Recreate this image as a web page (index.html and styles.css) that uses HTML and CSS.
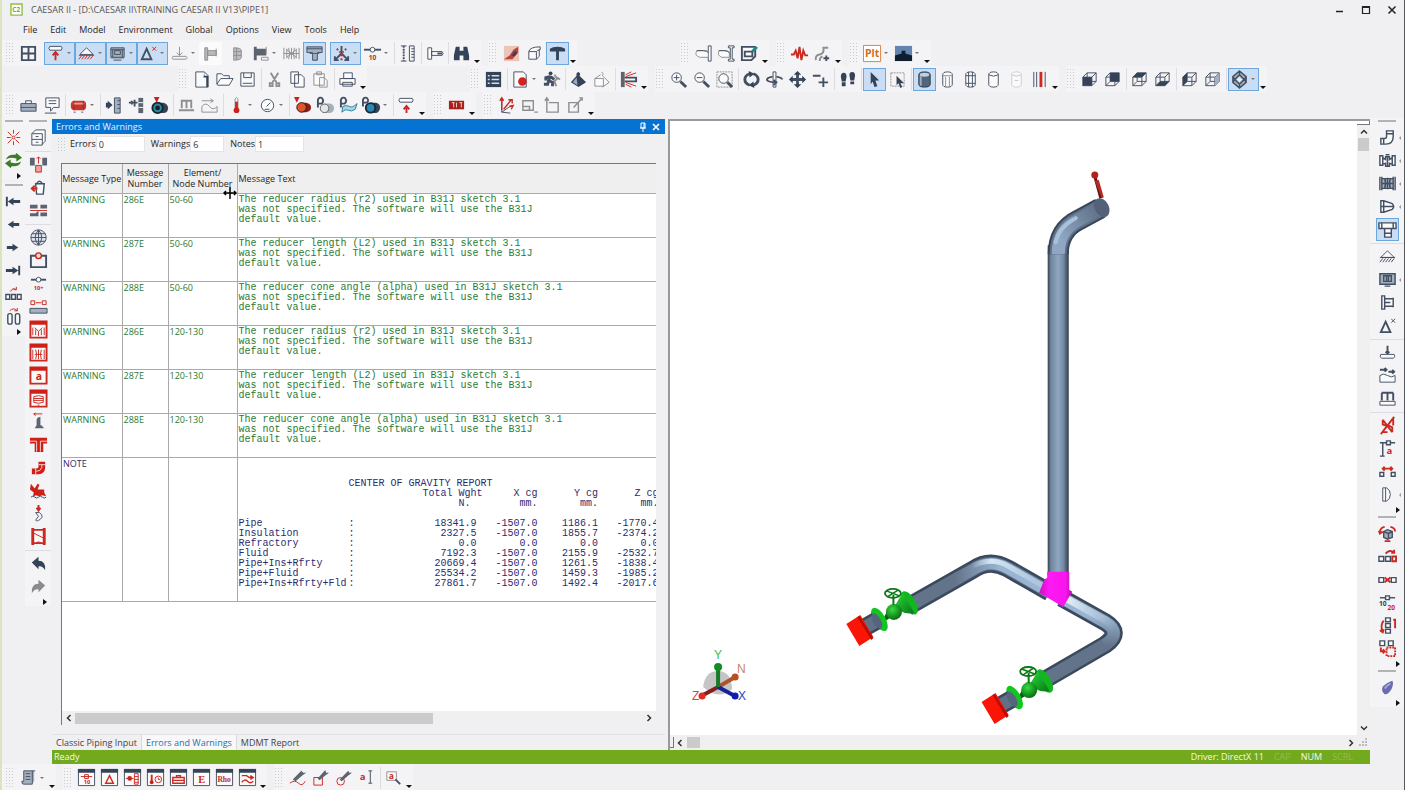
FILE: index.html
```html
<!DOCTYPE html>
<html lang="en">
<head>
<meta charset="utf-8">
<title>CAESAR II - PIPE1</title>
<link rel="stylesheet" href="styles.css">
</head>
<body>
<svg class="defs" aria-hidden="true">
  <symbol id="cyl" viewBox="0 0 20 20"><path d="M5 5v10q0 3 5 3t5-3V5q0-3-5-3T5 5z"/></symbol>
  <symbol id="cube" viewBox="0 0 20 20"><path class="k" d="M3 7.500h9.500v9H3zM7.500 3H17v9H7.500zM3 7.500 7.500 3M12.500 7.500 17 3M12.500 16.500 17 12M3 16.500 7.500 12"/></symbol>
  <symbol id="frame" viewBox="0 0 20 20"><path class="w" d="M1.500 1.500h17v17h-17z"/><path class="kf" d="M1 1h18v4H1z"/></symbol>
  <symbol id="rframe" viewBox="0 0 20 20"><path class="rw" d="M1.500 1.500h17v17h-17z"/><path class="rf" d="M1 1h18v4H1z"/></symbol>
</svg>

<header class="titlebar">
  <svg class="logo" viewBox="0 0 14 14"><path d="M1 1h12v12H1z" fill="#fff" stroke="#93bd45" stroke-width="1.500"/><text x="2.500" y="9.500" font-size="7" font-weight="700" fill="#7aa62c">C2</text></svg>
  <h1>CAESAR II - [D:\CAESAR II\TRAINING CAESAR II V13\PIPE1]</h1>
  <div class="winctl">
    <button aria-label="Minimize"><svg viewBox="0 0 10 10"><path d="M1 6.500h7" stroke="#222" stroke-width="1.500"/></svg></button>
    <button aria-label="Maximize"><svg viewBox="0 0 10 10"><path d="M1.500 1.500h7v7h-7zM1 2.500h8" fill="none" stroke="#222" stroke-width="1.200"/></svg></button>
    <button aria-label="Close"><svg viewBox="0 0 10 10"><path d="m1.500 1.500 7 7m0-7-7 7" stroke="#222" stroke-width="1.500"/></svg></button>
  </div>
</header>

<nav class="menu">
  <button>File</button><button>Edit</button><button>Model</button><button>Environment</button><button>Global</button><button>Options</button><button>View</button><button>Tools</button><button>Help</button>
</nav>

<div class="bars">
  <div class="row">
    <div class="group">
      <i class="grip"></i>
      <button class="b" aria-label="Layout"><svg viewBox="0 0 20 20"><path class="k2" d="M3 3h14v14H3zM10 3v14M3 10h14"/></svg></button>
      <i class="sep"></i>
      <button class="b drop on" aria-label="Forces"><svg viewBox="0 0 20 20"><path class="w" d="M4 2.500h12q2 1.500 0 4H4q-2-2 0-4z"/><path class="r2" d="M10 17V9M7 12l3-3.500 3 3.500"/></svg></button>
      <button class="b drop on" aria-label="Restraints"><svg viewBox="0 0 20 20"><path class="w" d="m10 4 7 7H3z"/><path class="r" d="M2 12h16M5 12l-3 4m6-4-3 4m6-4-3 4m6-4-3 4m6-4-3 4"/></svg></button>
      <button class="b drop on" aria-label="Hangers"><svg viewBox="0 0 20 20"><path class="gf" d="M3 4h14v12H3z"/><path class="k" d="M3 4h14v10H3zM3 6h14M5 6v8m10-8v8M7 7h6v4H7zM6 17h8"/></svg></button>
      <button class="b drop on" aria-label="Displacements"><svg viewBox="0 0 20 20"><path class="k2" d="m8 5 5 11H3z"/><path class="r" d="m14 3 4 4m0-4-4 4"/></svg></button>
      <button class="b drop" aria-label="Uniform loads"><svg viewBox="0 0 20 20"><path class="g" d="M10 3v9M7 9l3 3 3-3M3 13h14q2 3-1 3H4q-3 0-1-3z"/></svg></button>
      <button class="b pale" aria-label="Nozzles"><svg viewBox="0 0 20 20"><path fill="#b9b9bb" d="M4 4h3v13H4zM7 7h9v5H7z"/><path class="g" d="M4 4h3v13H4zM7 7h9v5H7zM16 5v8"/></svg></button>
      <i class="sep"></i>
      <button class="b" aria-label="Flange"><svg viewBox="0 0 20 20"><path fill="#bdbdbf" d="M6 4q8 0 8 3v7q0 3-8 3z"/><path class="g" d="M6 4q8 0 8 3v7q0 3-8 3zM9 4v13M6 8h8M6 12h8"/></svg></button>
      <button class="b drop" aria-label="Flange check"><svg viewBox="0 0 20 20"><path class="dk" d="M3 3h3v2h10v7H6v5H3z"/><path class="g" d="M16 3v8M11 14h7v3h-7z"/></svg></button>
      <button class="b" aria-label="Expansion joint"><svg viewBox="0 0 20 20"><path class="g" d="M2 4v12M18 4v12M5 5v10M15 5v10M7 4q2 6 0 12M10 4v12M13 4q-2 6 0 12M2 10h16M5 6l10 8M5 14l10-8"/></svg></button>
      <button class="b on" aria-label="Tee"><svg viewBox="0 0 20 20"><path class="gf" d="M2 3h16v6h-5v9H8V9H2z"/><path class="k" d="M2 3h16v6h-5v8H8V9H2zM2 5h16"/><path class="r" d="M5 10h10"/></svg></button>
      <i class="sep"></i>
      <button class="b drop on" aria-label="Axes"><svg viewBox="0 0 20 20"><path class="k2" d="M10 2v8l-6 6m6-6 6 6M3 13v4h4m6 0h4v-4"/><path class="r2" stroke-dasharray="2 2" d="m5 5 4 4m6-4-4 4m-1 2v7"/></svg></button>
      <button class="b drop" aria-label="Node numbers"><svg viewBox="0 0 20 20"><path class="k2" d="M1 6h18"/><circle class="w" cx="10" cy="6" r="2.500"/><text class="tr" x="6" y="17" font-size="7">10</text></svg></button>
      <i class="sep line"></i>
      <button class="b" aria-label="Length"><svg viewBox="0 0 20 20"><path class="k" d="M3 2h6M3 18h6M12 2h5v16h-5zM14 5h3m-3 3h3m-3 3h3m-3 3h3"/><path class="k2" stroke-dasharray="2 1" d="M6 2v16"/></svg></button>
      <i class="sep line"></i>
      <button class="b" aria-label="Tag"><svg viewBox="0 0 20 20"><path class="w" d="M3 4h4v12H3zM7 8h11q2 2 0 4H7z"/><path class="k2" d="M13 10h5"/></svg></button>
      <i class="sep line"></i>
      <button class="b" aria-label="Find"><svg viewBox="0 0 20 20"><path class="kf" d="M4 3h4v4h4V3h4l2 9v5h-6v-5H8v5H2v-5z"/></svg></button>
      <button class="more" aria-label="More"></button>
    </div>
    <div class="group">
      <i class="grip"></i>
      <button class="b" aria-label="Material"><svg viewBox="0 0 20 20"><path fill="#ecc4ba" d="M2 2h16v16H2z"/><path fill="#b6453b" d="m2 16 6-4 4-6 5-3v6l-6 7z"/><path class="kf" d="m10 12 4-5 2 3-3 3z"/></svg></button>
      <button class="b" aria-label="Volume"><svg viewBox="0 0 20 20"><path class="w" d="M4 8h8v8H4zM4 8q1-5 12-5v3q-3 0-4 2M12 16l3-3V6"/></svg></button>
      <button class="b on" aria-label="T view"><svg viewBox="0 0 20 20"><path class="kf" d="M2 5q3-2 8-2t8 2v3H2zM8.500 8h3v9h-3z"/></svg></button>
      <button class="more" aria-label="More"></button>
    </div>
    <div class="group far">
      <i class="grip"></i>
      <button class="b" aria-label="Pipe"><svg viewBox="0 0 20 20"><path class="w" d="M15 2h3v16h-3z"/><path class="gw" d="M3 7h7q4 0 5 2v5H6q-6-2-3-7z"/><path class="k" d="M3 7h7q4 0 5 2"/></svg></button>
      <button class="b" aria-label="Beam"><svg viewBox="0 0 20 20"><path class="gw" d="M2 7h6q3 0 5 2v5H5q-5-2-3-7z"/><path class="k" d="M2 7h6q3 0 5 2"/><path class="w" d="M12 2h6v2h-2v12h2v2h-6v-2h2V4h-2z"/></svg></button>
      <button class="b" aria-label="Save model"><svg viewBox="0 0 20 20"><path class="w2" d="M2 3h14v10l-4 4H2zM5 8h8v5H5z"/><path fill="#19898a" d="m12 7 4-5 3 2-5 5z"/></svg></button>
      <button class="more" aria-label="More"></button>
    </div>
    <div class="group">
      <i class="grip"></i>
      <button class="b" aria-label="Dynamics"><svg viewBox="0 0 20 20"><path class="r2" d="M1 11h3l2-4 2 8 2-12 2 14 2-10 2 5h3"/></svg></button>
      <button class="b" aria-label="Hydrodynamic"><svg viewBox="0 0 20 20"><path class="g2" d="M3 17q-1-5 4-6t4-7h5M7 18q0-4 3-5"/><path class="k2" d="M14 12v6m-3-3h6"/></svg></button>
      <button class="more" aria-label="More"></button>
    </div>
    <div class="group">
      <i class="grip"></i>
      <button class="b drop" aria-label="Plot"><svg viewBox="0 0 20 20"><path fill="#fff" stroke="#d98238" d="M.5 1.500h18v17H.5z"/><text x="2" y="14" font-size="11" font-weight="700" fill="#cf6d1f">Plt</text></svg></button>
      <button class="b drop" aria-label="Background"><svg viewBox="0 0 20 20"><path fill="#6385b0" d="M1 2h18v16H1z"/><path fill="#101c30" d="M1 18v-6l7-2V7h4v3l7 2v6z"/></svg></button>
      <button class="more" aria-label="More"></button>
    </div>
  </div>

  <div class="row">
    <div class="group indent">
      <i class="grip"></i>
      <button class="b" aria-label="New"><svg viewBox="0 0 20 20"><path class="w" d="M4 2h9l4 4v12H4z"/><path class="kf" d="M13 2v4h4v12h-2V8h-3z"/></svg></button>
      <button class="b" aria-label="Open"><svg viewBox="0 0 20 20"><path class="w" d="M2 15V4h5l2 2h6v3M2 15l4-6h13l-4 7H3z"/></svg></button>
      <button class="b" aria-label="Save"><svg viewBox="0 0 20 20"><path class="w" d="M3 3h14v14H3zM6 3v5h8V3M5 14h10"/></svg></button>
      <i class="sep line"></i>
      <button class="b" aria-label="Cut"><svg viewBox="0 0 20 20"><path class="g2" d="m6 3 6 10m2-10L8 13M5 14h3v3H5zm7 0h3v3h-3z"/></svg></button>
      <button class="b" aria-label="Copy"><svg viewBox="0 0 20 20"><path class="w" d="M3 2h8v12H3zM7 5h7l3 3v10H7z"/></svg></button>
      <button class="b" aria-label="Paste"><svg viewBox="0 0 20 20"><path class="gw" d="M3 4h11v12H3zM6 2h5v3H6zM9 8h5l3 3v7H9z"/></svg></button>
      <i class="sep line"></i>
      <button class="b" aria-label="Print"><svg viewBox="0 0 20 20"><path class="w" d="M6 3h9v6H6zM2 9h16v6H2zM5 13h10v4H5z"/></svg></button>
      <button class="more" aria-label="More"></button>
    </div>
    <div class="group far">
      <i class="grip"></i>
      <button class="b" aria-label="List"><svg viewBox="0 0 20 20"><path class="kf" d="M2 2h16v16H2z"/><path d="M4 6h2m2 0h8M4 10h2m2 0h8M4 14h2m2 0h8" stroke="#cfe0ee" stroke-width="1.500"/></svg></button>
      <i class="sep line"></i>
      <button class="b drop" aria-label="Error check"><svg viewBox="0 0 20 20"><path class="w" d="M3 2h10l3 3v13H3z"/><circle cx="12" cy="12" r="4.500" fill="#d32020"/></svg></button>
      <button class="b" aria-label="Run"><svg viewBox="0 0 20 20"><path class="g2" d="m13 5 3 4-3 3 2 5m1-9 3 2"/><circle class="kf" cx="9" cy="3.500" r="2"/><path class="k3" d="M9 6 7 11l4 2v4M7 11l-1 4H2M8 7 4 8v3m5-4 4 3"/></svg></button>
      <i class="sep line"></i>
      <button class="b" aria-label="Weight"><svg viewBox="0 0 20 20"><path class="kf" d="M10 2q3 2 1 4l7 7-8 5-8-5 6-7q-1-3 2-4z"/><path d="m8 8-4 5 5 3z" fill="#9babc0"/></svg></button>
      <button class="b" aria-label="Stress weight"><svg viewBox="0 0 20 20"><path fill="#a9abae" d="m11 6 7 7-7 5v-3l4-5z"/><path class="gw" d="M10 2q3 2 1 4l7 7-7 5M3 9h9v8H3zM3 9l6-4"/></svg></button>
      <i class="sep line"></i>
      <button class="b" aria-label="Section"><svg viewBox="0 0 20 20"><path class="dk" d="M2 2h4v16H2z"/><path class="k2" d="M6 8h12v4H6"/><path class="r" d="m7 7 11-4M7 5l6-3M7 13l11 4M7 15l6 3"/></svg></button>
      <button class="more" aria-label="More"></button>
    </div>
    <div class="group">
      <i class="grip"></i>
      <button class="b" aria-label="Zoom extents"><svg viewBox="0 0 20 20"><circle class="w" cx="8" cy="8" r="5"/><path class="k3" d="m12 12 6 6"/><path class="k" d="M8 5v6M5 8h6"/></svg></button>
      <button class="b" aria-label="Zoom"><svg viewBox="0 0 20 20"><circle class="w" cx="8" cy="8" r="5"/><path class="k3" d="m12 12 6 6"/><path class="k" d="M5 8h6"/></svg></button>
      <button class="b" aria-label="Zoom window"><svg viewBox="0 0 20 20"><path class="g" stroke-dasharray="2 1" d="M2 2h16v16H2z"/><circle class="w" cx="9" cy="9" r="5"/><path class="k3" d="m13 13 5 5"/></svg></button>
      <i class="sep line"></i>
      <button class="b" aria-label="Orbit"><svg viewBox="0 0 20 20"><path class="k3" d="M8 4Q3 6 3 10t5 6M12 4q5 2 5 6t-5 6"/><path class="kf" d="m7 1 6 3-5 4zM13 19l-6-3 5-4z"/></svg></button>
      <button class="b" aria-label="Turntable"><svg viewBox="0 0 20 20"><path class="w" d="M8.500 2h3v16h-3z"/><path class="k2" d="M8 7Q2 8 2 10.500 4 13 12 13m0-6q6 1 6 3M9 10.500l3 2.500-3 3"/></svg></button>
      <button class="b" aria-label="Pan"><svg viewBox="0 0 20 20"><path class="k3" d="M10 4v12M4 10h12"/><path class="kf" d="m10 1 4 4H6zM10 19l-4-4h8zM1 10l4-4v8zM19 10l-4 4V6z"/></svg></button>
      <button class="b" aria-label="Zoom in or out"><svg viewBox="0 0 20 20"><path class="k2" d="M2 6h8M8 13h10M13 8v10"/></svg></button>
      <i class="sep line"></i>
      <button class="b" aria-label="Walk"><svg viewBox="0 0 20 20"><path class="kf" d="M3 7q0-4 3-4t3 4l-1 5H4zM4 13h4v4H4zM12 5q0-3 3-3t3 4l-1 5h-4zM13 12h4v3h-4z"/></svg></button>
      <i class="sep line"></i>
      <button class="b on" aria-label="Select"><svg viewBox="0 0 20 20"><path class="kf" d="m6 2 9 9h-4l2 6-3 1-2-6-2 3z"/></svg></button>
      <button class="b" aria-label="Select window"><svg viewBox="0 0 20 20"><path class="g" stroke-dasharray="2 1" d="M3 3h14v14H3z"/><path class="kf" d="m9 6 8 8h-4l2 4-2 1-2-5-2 2z"/></svg></button>
      <i class="sep line"></i>
      <button class="b on" aria-label="Shaded"><svg viewBox="0 0 20 20"><path fill="#53657c" stroke="#2e3b4c" d="M4 5v10q0 3 6 3t6-3V5q0-3-6-3T4 5z"/><path fill="#9db0c4" d="M7 7v10q-2-.5-2-2V6z"/><ellipse cx="10" cy="5" rx="5" ry="2" fill="#c2d0dd"/></svg></button>
      <button class="b" aria-label="Silhouette lines"><svg viewBox="0 0 20 20"><use href="#cyl" class="w"/><path class="g" d="M5 6h10M8 7v11m4-11v11"/></svg></button>
      <button class="b" aria-label="Wireframe"><svg viewBox="0 0 20 20"><use href="#cyl" class="w"/><path class="k" d="M5 6h10M8 2v16m4-16v16M5 14h10"/></svg></button>
      <button class="b" aria-label="Hidden line"><svg viewBox="0 0 20 20"><use href="#cyl" class="w"/><path class="k" d="M5 5q5 3 10 0"/></svg></button>
      <button class="b" aria-label="Translucent"><svg viewBox="0 0 20 20"><use href="#cyl" class="pw"/><path class="pl" d="M5 5q5 3 10 0M8 11h4"/></svg></button>
      <button class="b" aria-label="Centerline"><svg viewBox="0 0 20 20"><path class="k" d="M4 2v16M7 2v16M16 2v16"/><path class="r3" d="M11.500 2v16"/></svg></button>
      <button class="more" aria-label="More"></button>
    </div>
    <div class="group">
      <i class="grip"></i>
      <button class="b" aria-label="Front view"><svg viewBox="0 0 20 20"><use href="#cube"/><path class="kf" d="M3 7.500h9.500v9H3z"/></svg></button>
      <button class="b" aria-label="Back view"><svg viewBox="0 0 20 20"><use href="#cube"/><path class="kf" d="M7.500 3H17v9H7.500z"/></svg></button>
      <i class="sep line"></i>
      <button class="b" aria-label="Top view"><svg viewBox="0 0 20 20"><use href="#cube"/><path class="kf" d="M3 7.500 7.500 3H17l-4.500 4.500z"/></svg></button>
      <button class="b" aria-label="Bottom view"><svg viewBox="0 0 20 20"><use href="#cube"/><path class="kf" d="M3 16.500 7.500 12H17l-4.500 4.500z"/></svg></button>
      <i class="sep line"></i>
      <button class="b" aria-label="Left view"><svg viewBox="0 0 20 20"><use href="#cube"/><path class="kf" d="M3 7.500 7.500 3v9L3 16.500z"/></svg></button>
      <button class="b" aria-label="Right view"><svg viewBox="0 0 20 20"><use href="#cube"/><path class="gf" d="M12.500 7.500 17 3v9l-4.500 4.500z"/></svg></button>
      <i class="sep line"></i>
      <button class="b drop on" aria-label="Isometric view"><svg viewBox="0 0 20 20"><path class="gf" d="m10 1 7 6v6l-7 6-7-6V7z"/><path class="k" stroke-width="1.500" d="m10 1 7 6v6l-7 6-7-6V7zM10 5l5 5-5 5-5-5zM10 1v4m0 10v4M3 7l2 3-2 3m14-6-2 3 2 3"/><path fill="#e8eef5" d="m10 7 3 3-3 3-3-3z"/></svg></button>
      <button class="more" aria-label="More"></button>
    </div>
  </div>

  <div class="row">
    <div class="group">
      <i class="grip"></i>
      <button class="b" aria-label="Toolbox"><svg viewBox="0 0 20 20"><path class="gf" d="M2 8h16v8H2z"/><path class="k" d="M2 8h16v8H2zM7 8V5h6v3M2 12h16"/></svg></button>
      <button class="b" aria-label="Comments"><svg viewBox="0 0 20 20"><path class="w" d="M4 2h14v10h-6l-3 4v-4H4zM3 18h12M7 5h8M7 8h8"/></svg></button>
      <i class="sep line"></i>
      <button class="b drop" aria-label="Vessel"><svg viewBox="0 0 20 20"><rect x="2" y="5" width="16" height="10" rx="4" fill="#cc3128"/><path fill="#ef9d94" d="M4 7h12v2H4z"/><path class="k" d="M5 5v10m10-10v10M5 17h2m6 0h2"/></svg></button>
      <i class="sep line"></i>
      <button class="b" aria-label="Rigid"><svg viewBox="0 0 20 20"><path class="gf" d="M11 2h6v16h-6z"/><path class="k" d="M11 2h6v16h-6zM14 5h3m-3 4h3m-3 4h3"/><path class="kf" d="M2 7h2V5l5 4.500L4 14v-2H2z"/></svg></button>
      <button class="b" aria-label="Anchor"><svg viewBox="0 0 20 20"><path class="dk" d="M12 2h5v16h-5z"/><path class="k2" d="M2 7h9M8 4v7M5 5v4"/><path d="M12 7h5m-5 5h5" stroke="#fff"/></svg></button>
      <button class="b" aria-label="Pipe size"><svg viewBox="0 0 20 20"><path class="kf" d="M8 7h6q5 1 5 6t-5 5H8z"/><circle cx="8" cy="12.500" r="5.500" fill="#2c8aa0" stroke="#18242f" stroke-width="2"/><circle cx="8" cy="12.500" r="2.500" fill="#15222e"/><path class="rf" d="M4 1h6L7 7z"/></svg></button>
      <i class="sep line"></i>
      <button class="b" aria-label="Uniform"><svg viewBox="0 0 20 20"><path class="g2" d="M4 5h12M5 5v8m5-8v8m5-8v8M2 15h16"/></svg></button>
      <button class="b" aria-label="Wind"><svg viewBox="0 0 20 20"><path class="g" d="M2 5h12l-3-2m3 2-3 2M2 11q4-5 8 0t8 0v6H2z"/></svg></button>
      <i class="sep line"></i>
      <button class="b drop" aria-label="Temperature"><svg viewBox="0 0 20 20"><path class="g" d="M8.500 3q1.500-3 3 0v10h-3z"/><path class="r3" d="M10 6v8"/><circle class="rf" cx="10" cy="15" r="3"/></svg></button>
      <button class="b drop" aria-label="Pressure"><svg viewBox="0 0 20 20"><circle class="w" cx="10" cy="10" r="6.500"/><path class="k" d="m9 11 4-4M7 14h5"/></svg></button>
      <i class="sep line"></i>
      <button class="b" aria-label="Pipe temperature"><svg viewBox="0 0 20 20"><path fill="#8d2016" d="M8 7h6q5 1 5 5t-5 5H8z"/><circle cx="9" cy="12" r="5" fill="#e0562a" stroke="#33130f"/><path class="rf" d="M1 1h6L4 7z"/></svg></button>
      <button class="b" aria-label="Pipe density"><svg viewBox="0 0 20 20"><path class="gf" d="M9 8h6q4 1 4 5t-4 5H9z"/><circle cx="9" cy="13" r="4.500" fill="#e5e5e5" stroke="#666"/><path class="k2" d="M2 12V4q1-3 4-2 3 3 0 6H2"/></svg></button>
      <button class="b" aria-label="Fluid density"><svg viewBox="0 0 20 20"><path fill="#a8d7e4" stroke="#2f7c96" d="M4 11q4-2 7 0t8-3l-2 6q-4 3-7 1t-7 2z"/><path class="k2" d="M2 12V4q1-3 4-2 3 3 0 6H2"/></svg></button>
      <button class="b drop" aria-label="Insulation density"><svg viewBox="0 0 20 20"><path class="kf" d="M9 7h6q4 1 4 5t-4 6H9z"/><circle cx="9" cy="12.500" r="5" fill="#2d88b1" stroke="#182a38" stroke-width="2"/><path class="k2" d="M1 11V4q1-3 4-2 3 3 0 5H1"/></svg></button>
      <i class="sep line"></i>
      <button class="b" aria-label="Force"><svg viewBox="0 0 20 20"><path class="w" d="M3 2.500h13q2 1.500 0 4H3q-2-2 0-4z"/><path class="r2" d="M10 18v-7M7 14l3-3.500 3 3.500"/></svg></button>
      <button class="more" aria-label="More"></button>
    </div>
    <div class="group">
      <i class="grip"></i>
      <button class="b" aria-label="Units"><svg viewBox="0 0 20 20"><path fill="#a8201b" d="M2 5h16v9H2z"/><path d="M5 7h3m-1 0v5m3-5v5m3-5h3m-1 0v5" stroke="#f3cfc9"/></svg></button>
      <button class="more" aria-label="More"></button>
    </div>
    <div class="group">
      <i class="grip"></i>
      <button class="b" aria-label="Origin"><svg viewBox="0 0 20 20"><path class="k" d="M5 4v13l10-7M5 17l9 1"/><path class="r" stroke-width="1.500" d="m7 14 8-10M3 5l2-3 2 3M12 4h4v4M13 11l4-1-2 4M5 3v12"/></svg></button>
      <button class="b" aria-label="Plane X"><svg viewBox="0 0 20 20"><path class="g" stroke-width="1.500" d="M3 5h11v10H3zM3 11h7v4M15 17h4"/></svg></button>
      <button class="b" aria-label="Plane Y"><svg viewBox="0 0 20 20"><path class="g" stroke-width="1.500" d="M6 7h10v10H4V2M2 5l2-3 2 3"/></svg></button>
      <button class="b" aria-label="Plane Z"><svg viewBox="0 0 20 20"><path class="g" stroke-width="1.500" d="M3 7h10v10H3zM8 12l9-10M14 2h3v3"/></svg></button>
      <button class="more" aria-label="More"></button>
    </div>
  </div>
</div>

<main class="main">
  <aside class="col">
    <div class="vgroup">
      <i class="hgrip"></i>
      <button class="b" aria-label="Break"><svg viewBox="0 0 20 20"><path class="r" d="m4 4 4 4m8-4-4 4m0 4 4 4M8 12l-4 4M10 2v4m0 8v4M3 10h4m6 0h4"/><circle class="r" cx="10" cy="10" r="1.500"/></svg></button>
      <button class="b" aria-label="Refresh"><svg viewBox="0 0 20 20"><path fill="#3d7d27" d="M2 9q2-6 10-5l1-2 6 5-6 4v-3Q6 6 2 9zM18 11q-2 6-10 5l-1 2-6-5 6-4v3q7 2 11-1z"/></svg></button>
      <button class="vmore" aria-label="More"></button>
    </div>
    <div class="vgroup">
      <i class="hgrip"></i>
      <button class="b" aria-label="First"><svg viewBox="0 0 20 20"><path class="kf" d="M2 5h2v10H2zM4 10l6-4v2.500h7v3h-7V14z"/></svg></button>
      <button class="b" aria-label="Previous"><svg viewBox="0 0 20 20"><path class="kf" d="m4 10 6-4v2.500h6v3h-6V14z"/></svg></button>
      <button class="b" aria-label="Next"><svg viewBox="0 0 20 20"><path class="kf" d="m15 10-6-4v2.500H3v3h6V14z"/></svg></button>
      <button class="b" aria-label="Last"><svg viewBox="0 0 20 20"><path class="kf" d="M15 5h2v10h-2zM15 10 9 6v2.500H2v3h7V14z"/></svg></button>
      <button class="b" aria-label="Insert element"><svg viewBox="0 0 20 20"><path class="w" stroke-width="1.500" d="M2 11h4v5H2zm6 0h4v5H8zm6 0h4v5h-4z"/><path class="r" d="M7 8q2-5 6-2m0-3v3h-3"/></svg></button>
      <button class="b" aria-label="Duplicate"><svg viewBox="0 0 20 20"><rect class="w" stroke-width="1.500" x="4" y="7" width="4.500" height="11" rx="2"/><rect class="w" stroke-width="1.500" x="12" y="7" width="4.500" height="11" rx="2"/><path class="r" d="M6 4q4-4 8 0m0-3v3h-3"/></svg></button>
      <button class="vmore" aria-label="More"></button>
    </div>
  </aside>

  <aside class="col">
    <div class="vgroup">
      <i class="hgrip"></i>
      <button class="b" aria-label="Archive"><svg viewBox="0 0 20 20"><path class="w" d="M3 6h11v12H3zM3 12h11M7 9h3m-3 6h3M3 6l4-4h10v12l-3 3"/></svg></button>
      <i class="hsep"></i>
      <button class="b" aria-label="Join"><svg viewBox="0 0 20 20"><path class="dk" d="M1 3h5v8H1zM14 3h5v8h-5z"/><path class="r" d="M10 2v7M8 4l2-2 2 2"/><path fill="#e9a49e" stroke="#cb2a22" d="M7 11h6v7H7z"/></svg></button>
      <button class="b" aria-label="Delete"><svg viewBox="0 0 20 20"><path class="w" stroke-width="1.500" d="M7 6h9l-1 11H8zM8 6q3-5 6 0"/><path class="r2" d="M2 11h7M6 8l-3 3 3 3"/></svg></button>
      <button class="b" aria-label="Split"><svg viewBox="0 0 20 20"><path class="dk" d="M1 4h8v4H1zM12 4h7v4h-7zM1 13h6l3-3v6H1zM12 12h7v4h-7z"/><path class="r" d="M1 10h18"/></svg></button>
      <i class="hsep"></i>
      <button class="b" aria-label="Coordinates"><svg viewBox="0 0 20 20"><circle cx="10" cy="10" r="8" fill="#dfe3ee"/><path class="k" d="M10 2a8 8 0 1 0 .1 0M2 10h16M10 2v16M10 2q-7 8 0 16M10 2q7 8 0 16M3 6h14M3 14h14"/></svg></button>
      <button class="b" aria-label="Nodes"><svg viewBox="0 0 20 20"><path class="k2" d="M2 5h16v12H2z"/><circle cx="10" cy="5" r="3" fill="#f6d3cb" stroke="#c8281e" stroke-width="1.500"/></svg></button>
      <button class="b" aria-label="Renumber"><svg viewBox="0 0 20 20"><path class="k2" d="M2 6h16"/><circle class="w" cx="10" cy="6" r="2.500"/><text class="tr" x="5" y="17" font-size="6">10+</text></svg></button>
      <button class="b" aria-label="Distance"><svg viewBox="0 0 20 20"><path class="r" d="M2 4h4v4H2zm12 0h4v4h-4zM7 6h6"/><path class="gf" d="M1 12h18v5H1z"/><path class="k" d="M1 12h18v5H1z"/></svg></button>
      <button class="b" aria-label="Bend list"><svg viewBox="0 0 20 20"><use href="#rframe"/><path class="r" d="M4 8v8m12-8v8M6 8l4 4v5m4-9-4 4M7 10v6m6-6v6"/></svg></button>
      <button class="b" aria-label="Reducer list"><svg viewBox="0 0 20 20"><use href="#rframe"/><path class="r" d="M4 7v10m12-10v10M6 12h8M7 7q2 5 0 10M13 7q-2 5 0 10M10 7v10"/></svg></button>
      <button class="b" aria-label="Allowable list"><svg viewBox="0 0 20 20"><use href="#rframe"/><text class="tr" x="7" y="15" font-size="11">a</text></svg></button>
      <button class="b" aria-label="Hanger list"><svg viewBox="0 0 20 20"><use href="#rframe"/><path class="r" d="M5 8q5-2 10 0v6q-5 2-10 0zM5 10h10M5 12h10M9 17h2"/></svg></button>
      <button class="b" aria-label="Equipment"><svg viewBox="0 0 20 20"><path class="r" d="M5 2h9M7 1 5 2l2 2"/><path class="dk" d="m9 6 3-1v9H8V8zM6 17l2-3h5l3 3z"/></svg></button>
      <button class="b" aria-label="Tees"><svg viewBox="0 0 20 20"><path class="rf" d="M1 3h18v6h-4v9H6V9H1z"/><path d="M1 6.500h7v11m4 0v-11h7" stroke="#f6d5d2" fill="none"/></svg></button>
      <button class="b" aria-label="Bends"><svg viewBox="0 0 20 20"><path class="rf" d="M10 4h7v6q0 7-7 7H3v-6h5q2 0 2-2z"/><path d="M7 11v6M10 7h7M13.500 7v3q-1 4-6 4" stroke="#f6d5d2" fill="none"/></svg></button>
      <button class="b" aria-label="Offshore"><svg viewBox="0 0 20 20"><path class="rf" d="m2 3 4 5 3-5 2 1-2 5h7v3l2 4-4-1-3 1-4-1-3 2 1-5-4-3z"/><path class="k" d="M2 17q2-2 4 0t4 0 4 0 4 0"/></svg></button>
      <button class="b" aria-label="Hook"><svg viewBox="0 0 20 20"><path class="r2" d="M10 1v6M8 4l2 3 2-3"/><path class="k" d="M7 9h4q5 4 1 7t-5 1l3-4z"/></svg></button>
      <button class="b" aria-label="Drawing"><svg viewBox="0 0 20 20"><path class="rw" d="M4 3h12v14H4z"/><path class="r3" d="M4 1v18M16 1v18"/><path class="r" d="m4 6 12 6M7 17q3-3 6 0"/></svg></button>
      <i class="hsep"></i>
      <button class="b" aria-label="Undo"><svg viewBox="0 0 20 20"><path class="kf" d="m3 9 7-6v4q8 0 7 10-3-5-7-4v3z"/></svg></button>
      <button class="b" aria-label="Redo"><svg viewBox="0 0 20 20"><path fill="#8b8b8b" d="m17 9-7-6v4q-8 0-7 10 3-5 7-4v3z"/></svg></button>
      <button class="vmore" aria-label="More"></button>
    </div>
  </aside>

  <section class="middle">
    <div class="work">
      <section class="dock">
        <header class="dock-title"><h2>Errors and Warnings</h2>
          <button aria-label="Pin"><svg viewBox="0 0 10 10"><path d="M3 1h4v5H3zM2 6h6M5 6v4M6 1v5" fill="none" stroke="#fff"/></svg></button>
          <button aria-label="Close"><svg viewBox="0 0 10 10"><path d="m2 2 6 6m0-6L2 8" stroke="#fff" stroke-width="1.600"/></svg></button>
        </header>
        <form class="counts">
          <i class="grip"></i>
          <label for="ce">Errors</label><input id="ce" class="long" value="0" readonly>
          <label for="cw">Warnings</label><input id="cw" class="short" value="6" readonly>
          <label for="cn">Notes</label><input id="cn" class="long" value="1" readonly>
        </form>
        <div class="sheet">
          <div class="clip">
          <table class="msgs">
            <colgroup><col class="c1"><col class="c2"><col class="c3"><col></colgroup>
            <thead><tr><th>Message Type</th><th>Message<br>Number</th><th class="edge">Element/<br>Node Number<svg class="cursor" viewBox="0 0 14 14"><path d="M7 1v12M1 7h12M3 5 1 7l2 2m8-4 2 2-2 2" fill="none" stroke="#000" stroke-width="1.500"/></svg></th><th class="left">Message Text</th></tr></thead>
            <tbody>
              <tr><td>WARNING</td><td>286E</td><td>50-60</td><td class="mono">The reducer radius (r2) used in B31J sketch 3.1<br>was not specified. The software will use the B31J<br>default value.</td></tr>
              <tr><td>WARNING</td><td>287E</td><td>50-60</td><td class="mono">The reducer length (L2) used in B31J sketch 3.1<br>was not specified. The software will use the B31J<br>default value.</td></tr>
              <tr><td>WARNING</td><td>288E</td><td>50-60</td><td class="mono">The reducer cone angle (alpha) used in B31J sketch 3.1<br>was not specified. The software will use the B31J<br>default value.</td></tr>
              <tr><td>WARNING</td><td>286E</td><td>120-130</td><td class="mono">The reducer radius (r2) used in B31J sketch 3.1<br>was not specified. The software will use the B31J<br>default value.</td></tr>
              <tr><td>WARNING</td><td>287E</td><td>120-130</td><td class="mono">The reducer length (L2) used in B31J sketch 3.1<br>was not specified. The software will use the B31J<br>default value.</td></tr>
              <tr><td>WARNING</td><td>288E</td><td>120-130</td><td class="mono">The reducer cone angle (alpha) used in B31J sketch 3.1<br>was not specified. The software will use the B31J<br>default value.</td></tr>
              <tr class="note"><td>NOTE</td><td></td><td></td><td class="mono">
                <table class="cog">
                  <caption>CENTER OF GRAVITY REPORT</caption>
                  <colgroup><col class="name"><col class="colon"><col class="wt"><col class="x"><col><col></colgroup>
                  <thead>
                    <tr><th></th><th></th><th>Total Wght<br>N.&nbsp;&nbsp;</th><th>X cg<br>mm.</th><th>Y cg<br>mm.</th><th>Z cg<br>mm.</th></tr>
                  </thead>
                  <tbody>
                    <tr><td>Pipe</td><td>:</td><td>18341.9</td><td>-1507.0</td><td>1186.1</td><td>-1770.4</td></tr>
                    <tr><td>Insulation</td><td>:</td><td>2327.5</td><td>-1507.0</td><td>1855.7</td><td>-2374.2</td></tr>
                    <tr><td>Refractory</td><td>:</td><td>0.0</td><td>0.0</td><td>0.0</td><td>0.0</td></tr>
                    <tr><td>Fluid</td><td>:</td><td>7192.3</td><td>-1507.0</td><td>2155.9</td><td>-2532.7</td></tr>
                    <tr><td>Pipe+Ins+Rfrty</td><td>:</td><td>20669.4</td><td>-1507.0</td><td>1261.5</td><td>-1838.4</td></tr>
                    <tr><td>Pipe+Fluid</td><td>:</td><td>25534.2</td><td>-1507.0</td><td>1459.3</td><td>-1985.2</td></tr>
                    <tr><td>Pipe+Ins+Rfrty+Fld</td><td>:</td><td>27861.7</td><td>-1507.0</td><td>1492.4</td><td>-2017.6</td></tr>
                  </tbody>
                </table>
              </td></tr>
            </tbody>
          </table>
          </div>
          <div class="hscroll">
            <button aria-label="Scroll left"><svg viewBox="0 0 10 10"><path d="M6.500 2 3.500 5l3 3"/></svg></button>
            <div class="track"><i class="thumb big"></i></div>
            <button aria-label="Scroll right"><svg viewBox="0 0 10 10"><path d="m3.500 2 3 3-3 3"/></svg></button>
          </div>
        </div>
        <nav class="tabs"><button>Classic Piping Input</button><button class="active">Errors and Warnings</button><button>MDMT Report</button></nav>
      </section>

      <section class="view">
        <svg class="scene" viewBox="671 121 686 613" preserveAspectRatio="xMidYMid meet" role="img" aria-label="3D piping model">
          <defs>
            <linearGradient id="riser" gradientUnits="userSpaceOnUse" x1="1048" y1="0" x2="1069" y2="0"><stop offset="0" stop-color="#33404f"/><stop offset=".15" stop-color="#71859d"/><stop offset=".5" stop-color="#8fa7c3"/><stop offset=".75" stop-color="#7389a4"/><stop offset="1" stop-color="#313c4c"/></linearGradient>
            <linearGradient id="hiA" gradientUnits="userSpaceOnUse" x1="955" y1="0" x2="1000" y2="0"><stop offset="0" stop-color="#9ab5d1" stop-opacity="0"/><stop offset="1" stop-color="#9ab5d1"/></linearGradient>
            <linearGradient id="shA" gradientUnits="userSpaceOnUse" x1="972" y1="0" x2="1050" y2="0"><stop offset="0" stop-color="#d6e7f6" stop-opacity="0"/><stop offset=".25" stop-color="#d6e7f6"/><stop offset="1" stop-color="#b9d0e6" stop-opacity=".4"/></linearGradient>
            <linearGradient id="hiB" gradientUnits="userSpaceOnUse" x1="0" y1="615" x2="0" y2="645"><stop offset="0" stop-color="#9ab5d1"/><stop offset="1" stop-color="#9ab5d1" stop-opacity="0"/></linearGradient>
            <linearGradient id="shB" gradientUnits="userSpaceOnUse" x1="1062" y1="0" x2="1115" y2="0"><stop offset="0" stop-color="#f2f8fd"/><stop offset="1" stop-color="#c4d9ec" stop-opacity="0"/></linearGradient>
            <linearGradient id="hiC" gradientUnits="userSpaceOnUse" x1="1062" y1="240" x2="1100" y2="210"><stop offset="0" stop-color="#8fa7c3"/><stop offset="1" stop-color="#8fa7c3" stop-opacity="0"/></linearGradient>
            <radialGradient id="ball" cx=".4" cy=".35" r=".7"><stop offset="0" stop-color="#35dc42"/><stop offset="1" stop-color="#05660c"/></radialGradient>
            <linearGradient id="cone" x1="0" y1="0" x2="1" y2="1"><stop offset="0" stop-color="#29d936"/><stop offset="1" stop-color="#07751a"/></linearGradient>
            <linearGradient id="tee" x1="0" y1="0" x2="1" y2="0"><stop offset="0" stop-color="#c910c2"/><stop offset=".3" stop-color="#ff18f4"/><stop offset=".8" stop-color="#f716ec"/><stop offset="1" stop-color="#b50caf"/></linearGradient>
            <g id="valve">
              <path d="m890 606 8 6-9 6-8 5z" fill="#07600d"/>
              <ellipse cx="880" cy="618.500" rx="6" ry="13" transform="rotate(-30 880 618.500)" fill="#12c620"/>
              <path d="m863 628 14-8" stroke="#3c4859" stroke-width="18"/><path d="m863 628 14-8" stroke="#607088" stroke-width="13"/>
              <ellipse cx="877.500" cy="620" rx="4" ry="8.500" transform="rotate(-30 877.500 620)" fill="#56657b"/>
              <ellipse cx="910" cy="602" rx="6" ry="13" transform="rotate(-30 910 602)" fill="#12b720"/>
              <path d="m896 604 7-12 12 20q-8 2-16-3z" fill="url(#cone)"/>
              <circle cx="894.500" cy="611" r="8" fill="url(#ball)"/>
              <path d="M894 604V594" stroke="#0a7a16" stroke-width="2"/>
              <ellipse cx="893.500" cy="592.500" rx="8" ry="4.500" fill="none" stroke="#0a7a16" stroke-width="1.800"/>
              <path d="m887 590 13 5m-12 1 11-7" stroke="#0a7a16" stroke-width="1.500"/>
              <path d="m847 623 14-9 13 22-14 9z" fill="#fb1506"/><path d="m860 615 14 22-2 2-14-23z" fill="#b70d03"/>
            </g>
          </defs>
          <g fill="none">
            <path d="M1048 245h21v330h-21z" fill="url(#riser)"/>
            <path d="M1058.500 254q0-24 20-34l22-12" stroke="#38465a" stroke-width="21"/>
            <path d="M1058.500 254q0-24 20-34l22-12" stroke="#5f7087" stroke-width="17"/>
            <path d="M1058.500 254q0-24 20-34l20-11" stroke="url(#hiC)" stroke-width="13"/>
            <path d="M1056 242q3-15 20-24" stroke="#a9c1da" stroke-width="4" stroke-linecap="round"/>
            <ellipse cx="1102" cy="207.500" rx="7" ry="10" transform="rotate(-28 1102 207.500)" fill="#536278"/>
            <path d="m908 606 66-37.500q16-11 34-1l42 24" stroke="#3b495c" stroke-width="18"/>
            <path d="m908 606 66-37.500q16-11 34-1l42 24" stroke="#62738a" stroke-width="13"/>
            <path d="m908 606 66-37.500q16-11 34-1l42 24" stroke="url(#hiA)" stroke-width="11"/>
            <path d="m970 567q20-12 38-2l42 24" stroke="url(#shA)" stroke-width="5"/>
            <path d="m1062 597 43 24q18 11 0 23l-62 36" stroke="#3b495c" stroke-width="18"/>
            <path d="m1062 597 43 24q18 11 0 23l-62 36" stroke="#62738a" stroke-width="13"/>
            <path d="m1062 597 43 24q18 11 0 23" stroke="url(#hiB)" stroke-width="12"/>
            <path d="m1062 595 43 24q8 5 9 10" stroke="url(#shB)" stroke-width="7"/>
          </g>
          <path d="M1047.500 571h22v18l3 2-9 15-24-14 5-13 3-2z" fill="url(#tee)"/>
          <use href="#valve"/><use href="#valve" transform="translate(135 78)"/>
          <path d="m1095 176 6 22" stroke="#611310" stroke-width="3"/><path d="m1095 181 7 17 2-1-5-17z" fill="#b52b24"/><circle cx="1095" cy="175" r="3.500" fill="#b61f1b"/>
          <g class="triad">
            <path d="M704 686q2-16 15-16t14 18q-13 12-29-2z" fill="#b8b6b8" opacity=".8"/>
            <path d="m719 686 17-10" stroke="#a8552e" stroke-width="4"/><circle cx="736" cy="676" r="3.500" fill="#b94e20"/>
            <path d="m719 686-15 8" stroke="#871e1e" stroke-width="4"/><circle cx="703" cy="695" r="3.500" fill="#dd2e27"/>
            <path d="m719 686 15 8" stroke="#15209a" stroke-width="4"/><circle cx="736" cy="695" r="3.500" fill="#101db2"/>
            <path d="M719 686v-20" stroke="#147b26" stroke-width="4"/><circle cx="719" cy="666" r="4" fill="#128c25"/>
            <text x="715" y="658" fill="#3dbb4d">Y</text><text x="738" y="672" fill="#c98564">N</text><text x="693" y="699" fill="#d8463b">Z</text><text x="739" y="699" fill="#3040bd">X</text>
          </g>
        </svg>
        <div class="vscroll">
          <i class="split"></i>
          <button aria-label="Scroll up"><svg viewBox="0 0 10 10"><path d="m2 6.500 3-3 3 3"/></svg></button>
          <div class="vtrack"><i class="vthumb"></i></div>
          <button aria-label="Scroll down"><svg viewBox="0 0 10 10"><path d="m2 3.500 3 3 3-3"/></svg></button>
        </div>
        <div class="hscroll view-h">
          <i class="vsplit"></i>
          <button aria-label="Scroll left"><svg viewBox="0 0 10 10"><path d="M6.500 2 3.500 5l3 3"/></svg></button>
          <div class="track"><i class="thumb small"></i></div>
          <button aria-label="Scroll right"><svg viewBox="0 0 10 10"><path d="m3.500 2 3 3-3 3"/></svg></button>
        </div>
        <svg class="corner" viewBox="0 0 12 12"><path d="M8 3h2v2H8zM8 6h2v2H8zM5 6h2v2H5zM8 9h2v2H8zM5 9h2v2H5zM2 9h2v2H2z" fill="#bcbcbc"/></svg>
      </section>
    </div>
    <footer class="status"><span class="ready">Ready</span><span>Driver: DirectX 11</span><span class="off">CAP</span><span>NUM</span><span class="off">SCRL</span></footer>
  </section>

  <aside class="col right">
    <div class="vgroup">
      <i class="hgrip"></i>
      <button class="b side" aria-label="Bend"><svg viewBox="0 0 20 20"><path class="w" stroke-width="1.500" d="M9 3h7v6q0 8-8 8H3v-6h4q2 0 2-2zM6 11v6M9 6h7"/></svg></button>
      <button class="b side" aria-label="Valve"><svg viewBox="0 0 20 20"><path class="w" stroke-width="1.500" d="M2 5h3v10H2zM15 5h3v10h-3zM5 7l3 2V6h4v3l3-2v7l-3-1v3H8v-3l-3 1zM8 4h4M10 6v10"/></svg></button>
      <button class="b side" aria-label="Expansion joint"><svg viewBox="0 0 20 20"><path class="gf" d="M4 6h12v8H4z"/><path class="k" stroke-width="1.500" d="M2 3v14M4 3v14M16 3v14M18 3v14M4 10h12M7 5q2 5 0 10M10 4v12M13 5q-2 5 0 10M4 5h12M4 15h12"/></svg></button>
      <button class="b side" aria-label="Reducer"><svg viewBox="0 0 20 20"><path class="w" stroke-width="1.500" d="M3 4h3l9 3q3 3 0 6l-9 3H3zM6 4v12M3 10h13"/></svg></button>
      <button class="b on" aria-label="Tee"><svg viewBox="0 0 20 20"><path class="w" stroke-width="1.500" d="M1 3h18v6h-5v9H7V9H1zM4 3v6m12-6v6M7 9h7M7 14h7"/></svg></button>
      <i class="hsep"></i>
      <button class="b" aria-label="Support"><svg viewBox="0 0 20 20"><path class="w" d="m10 4 7 7H3z"/><path class="k" d="M2 11h16M5 12l-3 4m6-4-3 4m6-4-3 4m6-4-3 4m6-4-3 4"/></svg></button>
      <button class="b side" aria-label="Hanger"><svg viewBox="0 0 20 20"><path class="gf" d="M2 4h16v11H2z"/><path class="k" stroke-width="1.500" d="M2 4h16v11H2zM6 6h8v6H6zM9 6v6m2-6v6M7 17h6"/></svg></button>
      <button class="b" aria-label="Nozzle"><svg viewBox="0 0 20 20"><path class="w" stroke-width="1.500" d="M4 3h3v14H4zM7 6h9v8H7zM7 10h6M16 5v10"/></svg></button>
      <button class="b" aria-label="Displacement"><svg viewBox="0 0 20 20"><path class="k2" d="m8 6 5 11H3z"/><path class="k" d="m14 3 4 4m0-4-4 4"/></svg></button>
      <i class="hsep"></i>
      <button class="b" aria-label="Force"><svg viewBox="0 0 20 20"><path class="k2" d="M10 3v8M8 9l2 2 2-2"/><path class="w" d="M3 12h14q2 3-1 4H4q-3-1-1-4z"/></svg></button>
      <button class="b" aria-label="Wind"><svg viewBox="0 0 20 20"><path class="w" d="M2 10q4-3 8 0t8 0v7H2z"/><path class="k2" d="M2 4h7M7 2l2 2-2 2M11 6h6m-2-2 2 2-2 2"/></svg></button>
      <button class="b" aria-label="Uniform load"><svg viewBox="0 0 20 20"><path class="k2" d="M4 4h12M4 4v8m6-8v8m6-8v8"/><path class="w" d="M2 13h16v4H2z"/></svg></button>
      <i class="hsep"></i>
      <button class="b" aria-label="Stress"><svg viewBox="0 0 20 20"><path class="r2" d="M17 1 3 19M5 4l10 13M5 4v5l6 2M15 17v-5l-6-3M4 17h6M16 3v7"/></svg></button>
      <button class="b" aria-label="Allowable"><svg viewBox="0 0 20 20"><path class="k" stroke-width="1.500" d="M2 4h16M5 4v14M2 18h5"/><path class="w" stroke-width="1.500" d="M9 2h4v4H9z"/><text class="tr" x="9" y="16" font-size="10">a</text></svg></button>
      <button class="b" aria-label="Node distance"><svg viewBox="0 0 20 20"><path class="w" stroke-width="1.500" d="M2 11h4v4H2zm12 0h4v4h-4z"/><path class="r2" d="M5 7h10M7 5 5 7l2 2m6-4 2 2-2 2"/></svg></button>
      <button class="b side" aria-label="Cap"><svg viewBox="0 0 20 20"><path class="w" d="M5 3h4q4 2 4 7t-4 7H5zM8 3v14"/></svg></button>
      <button class="vmore" aria-label="More"></button>
    </div>
    <div class="vgroup">
      <i class="hgrip"></i>
      <button class="b" aria-label="Rotate"><svg viewBox="0 0 20 20"><path class="gf" d="m6 8 4-2 5 2v6l-5 2-4-2z"/><path class="k" stroke-width="1.500" d="m6 8 4-2 5 2v6l-5 2-4-2zM6 8l5 2v6m0-6 4-2"/><path class="r2" d="M7 3Q2 4 2 9m11-6q5 1 5 5M7 18h6M1 7l1 3 3-2"/></svg></button>
      <button class="b" aria-label="Insert node"><svg viewBox="0 0 20 20"><path class="w" stroke-width="1.500" d="M1 10h5v5H1zm7 0h5v5H8z"/><path class="r2" d="M15 10h4v5h-4zM8 7q4-5 9-1m0-3v3h-3"/></svg></button>
      <button class="b" aria-label="Delete element"><svg viewBox="0 0 20 20"><path class="w" stroke-width="1.500" d="M1 8h5v5H1zm13 0h5v5h-5z"/><path class="r2" d="m7 8 6 5m0-5-6 5"/></svg></button>
      <button class="b" aria-label="Change numbers"><svg viewBox="0 0 20 20"><path class="k" stroke-width="1.500" d="M2 5h16"/><path class="w" stroke-width="1.500" d="M8 3h4v4H8z"/><text class="tk" x="1" y="14" font-size="7">10</text><text class="tr" x="10" y="18" font-size="7">20</text></svg></button>
      <button class="b" aria-label="Reverse"><svg viewBox="0 0 20 20"><path class="w" stroke-width="1.500" d="M8 2h5v4H8zm0 6h5v4H8zm0 6h5v4H8z"/><path class="r2" d="M6 5q-4 4-1 12M2 15l3 2 1-3M16 4h2v9"/></svg></button>
      <button class="b" aria-label="Move"><svg viewBox="0 0 20 20"><path class="w" stroke-width="1.500" d="M2 2h5v5H2zm9 0h5v5h-5z"/><path class="r2" stroke-dasharray="2 1" d="M9 9h9v9H9z"/><path class="r2" d="M3 9v4h4m-2-2 2 2-2 2"/></svg></button>
      <button class="vmore" aria-label="More"></button>
    </div>
    <div class="vgroup">
      <i class="hgrip"></i>
      <button class="b" aria-label="Smart tool"><svg viewBox="0 0 20 20"><path fill="#6c6bb0" d="M5 9q4-4 10-6 2 3-1 9-4 6-7 5-4-3-2-8z"/><path d="M7 11q3-4 6-5" stroke="#b4b3dd" stroke-width="1.500" fill="none"/></svg></button>
      <button class="vmore" aria-label="More"></button>
    </div>
  </aside>
</main>

<div class="row bottom">
  <div class="group">
    <i class="grip"></i>
    <button class="b drop" aria-label="Report"><svg viewBox="0 0 20 20"><path class="gf" d="M5 3h11v11l-3 3H3v-3h2z"/><path class="k" d="M5 3h12M5 3v11H3q0 3 2 3h9V3M7 6h5M7 9h5M7 12h5"/></svg></button>
    <button class="more" aria-label="More"></button>
  </div>
  <div class="group">
    <i class="grip"></i>
    <button class="b" aria-label="Node list"><svg viewBox="0 0 20 20"><use href="#frame"/><path class="r" d="M4 9h12M8 7h4v4H8z"/><text class="tr" x="7" y="17" font-size="6">10</text></svg></button>
    <button class="b" aria-label="Displacement list"><svg viewBox="0 0 20 20"><use href="#frame"/><path class="r" stroke-width="1.500" d="m10 8 4 8H6z"/></svg></button>
    <button class="b" aria-label="Section list"><svg viewBox="0 0 20 20"><use href="#frame"/><circle class="rf" cx="7" cy="11" r="2.500"/><path class="r" d="M12 6h4v11h-4zM12 9h4m-4 3h4m-4 3h4M3 11h8"/></svg></button>
    <button class="b" aria-label="Temperature list"><svg viewBox="0 0 20 20"><use href="#frame"/><path class="r2" d="M6 7v7"/><circle class="rf" cx="6" cy="15" r="2"/><circle class="r" cx="13" cy="12" r="3.500"/><path class="r" d="M13 10v2h2"/></svg></button>
    <button class="b" aria-label="Toolbox list"><svg viewBox="0 0 20 20"><use href="#frame"/><path class="r" stroke-width="1.500" d="M4 10h12v6H4zM8 10V8h4v2M4 13h12"/></svg></button>
    <button class="b" aria-label="Elastic list"><svg viewBox="0 0 20 20"><use href="#frame"/><text class="tr serif" x="6.500" y="16" font-size="11">E</text></svg></button>
    <button class="b" aria-label="Density list"><svg viewBox="0 0 20 20"><use href="#frame"/><text class="tr serif" x="2.500" y="15" font-size="8">Rho</text></svg></button>
    <button class="b" aria-label="Wind list"><svg viewBox="0 0 20 20"><use href="#frame"/><path class="r" stroke-width="1.500" d="M4 8h5l3 2h4M4 15q3-4 6-1t6 0M13 8l3 2-3 2"/></svg></button>
    <button class="more" aria-label="More"></button>
  </div>
  <div class="group">
    <i class="grip"></i>
    <button class="b" aria-label="Pencil line"><svg viewBox="0 0 20 20"><path class="dk" d="m5 12 9-9 2 2h3l-4 3-7 6z"/><path class="r" d="M2 16q5-4 9 0t7-2"/></svg></button>
    <button class="b" aria-label="Pencil box"><svg viewBox="0 0 20 20"><path class="r" d="M3 10h9v8H3z"/><path class="dk" d="m7 11 8-9 1 3h3l-4 3-6 5z"/></svg></button>
    <button class="b" aria-label="Pencil circle"><svg viewBox="0 0 20 20"><circle class="r" cx="7" cy="14" r="4"/><path class="dk" d="m6 12 9-9 1 2h3l-4 3-7 6z"/></svg></button>
    <button class="b" aria-label="Text"><svg viewBox="0 0 20 20"><text class="tr" x="3" y="13" font-size="10">a</text><path class="k" d="M12 3h4M12 16h4M14 3v13"/></svg></button>
    <i class="sep line"></i>
    <button class="b" aria-label="Find text"><svg viewBox="0 0 20 20"><path class="gw" d="M3 4h10v9H3z"/><text class="tr" x="5" y="12" font-size="9">a</text><path class="k2" d="m12 12 5 5"/></svg></button>
    <button class="more" aria-label="More"></button>
  </div>
</div>
</body>
</html>
```
FILE: styles.css
```css
* { box-sizing: border-box; }
body {
  margin: 0;
  min-height: 100vh;
  display: flex;
  flex-direction: column;
  background: #f0eff2;
  border-left: 2px solid #dbe5bd;
  border-right: 1px solid #55595e;
  color: #1e1e1e;
  font: 9px/12px "Open Sans", "Noto Sans", sans-serif;
}
button { font: inherit; color: inherit; background: none; border: 0; padding: 0; margin: 0; }
h1, h2 { margin: 0; font: inherit; }
svg { display: block; }
.defs { width: 0; height: 0; position: absolute; }

/* icon strokes and fills */
.k, .k2, .k3, .g, .g2, .r, .r2, .r3 { fill: none; }
.k, .k2, .k3, .w, .w2 { stroke: #435063; }
.g, .g2, .gw { stroke: #8f8f92; }
.r, .r2, .r3, .rw { stroke: #cb2a22; }
.k2, .g2, .r2, .w2 { stroke-width: 2px; }
.k3, .r3 { stroke-width: 3px; }
.w, .w2, .gw, .rw { fill: #fbfbfc; }
.rw { stroke-width: 2px; }
.kf { fill: #344357; }
.dk { fill: #5b6470; }
.gf { fill: #a3b0bf; }
.rf { fill: #cf2018; }
.pw { fill: #fafafa; stroke: #cfcfcf; }
.pl { fill: none; stroke: #c4c4c4; }
.tr { fill: #c8281e; font-weight: 700; }
.tk { fill: #2b3f58; font-weight: 700; }
.serif { font-family: "Liberation Serif", serif; }

.titlebar { display: flex; align-items: center; height: 19px; padding-left: 8px; color: #555; }
.logo { width: 13px; height: 13px; margin-right: 8px; }
.titlebar h1 { flex: 1; }
.winctl { display: flex; gap: 16px; padding-right: 7px; }
.winctl svg { width: 10px; height: 10px; }
.menu { display: flex; gap: 13px; height: 21px; align-items: center; padding-left: 21px; }

.row { display: flex; gap: 7px; height: 26px; }
.group { display: flex; align-items: center; background: #f4f3f5; }
.row > .group:first-child { padding-left: 3px; }
.row > .group.indent { margin-left: 176px; padding-left: 0; }
.row > .group.far { margin-left: 96px; }
.grip {
  width: 8px; height: 22px; margin-right: 4px; flex: none;
  background: radial-gradient(circle, #c9c9cb 1px, transparent 1px) 0 0 / 3px 3px;
}
.b { width: 23px; height: 23px; flex: none; display: flex; align-items: center; padding: 1px; border: 1px solid transparent; }
.b svg { width: 19px; height: 19px; flex: none; }
.b.drop { width: 31px; }
.b.drop::after { content: ""; border: 2px solid transparent; border-top-color: #777; border-bottom: 0; margin-left: 2px; }
.b.on { background: #c9def5; border-color: #6ba6dc; }
.b.pale { background: #fbfbfb; }
.b.side { position: relative; }
.b.side::after { content: ""; position: absolute; right: -3px; border: 2px solid transparent; border-right-color: #999; border-left: 0; }
.sep { width: 4px; height: 22px; flex: none; }
.sep.line { background: linear-gradient(#dddce0, #dddce0) center / 1px 100% no-repeat; }
.more { width: 8px; height: 20px; display: flex; align-items: flex-end; justify-content: center; }
.more::after { content: ""; border: 3px solid transparent; border-top-color: #111; border-bottom: 0; }

.main { flex: 1; display: flex; min-height: 0; }
.col { width: 26px; flex: none; display: flex; flex-direction: column; gap: 2px; }
.main > .col:first-child { width: 23px; }
.col:nth-child(2) { margin-right: 1px; }
.col.right { width: 34px; gap: 0; }
.vgroup { display: flex; flex-direction: column; align-items: center; background: #f4f3f5; }
.hgrip { width: 18px; height: 8px; background: linear-gradient(#b3b3b5, #b3b3b5) center 2px / 100% 2px no-repeat; }
.hsep { width: 100%; height: 4px; background: linear-gradient(#dddce0, #dddce0) center / 100% 1px no-repeat; }
.vmore { height: 8px; align-self: flex-end; margin-right: 4px; display: flex; align-items: center; }
.vmore::after { content: ""; border: 3px solid transparent; border-left: 4px solid #111; border-right: 0; }

.middle { flex: 1; min-width: 0; display: flex; flex-direction: column; }
.work { flex: 1; display: flex; gap: 3px; min-height: 0; padding-top: 1px; }
.dock { flex: 7 1 0; min-width: 0; display: flex; flex-direction: column; }
.dock-title { display: flex; align-items: center; gap: 3px; height: 15px; padding: 0 4px; background: #0673d0; color: #e6f1fb; }
.dock-title h2 { flex: 1; }
.dock-title svg { width: 10px; height: 10px; }
.counts { display: flex; align-items: center; height: 20px; padding-left: 5px; }
.counts .grip { height: 14px; margin-right: 5px; }
.counts input { height: 16px; border: 1px solid #e4e4e6; background: #fff; font: inherit; color: #333; padding: 0 2px; margin-right: 6px; }
.long { width: 49px; }
.short { width: 34px; }
.sheet { flex: 1; min-height: 0; margin: 9px; background: #fff; border-left: 1px solid #777; border-top: 1px solid #777; display: flex; flex-direction: column; overflow: hidden; }
.clip { flex: 1; min-height: 0; overflow: hidden; }
.msgs { width: 100%; table-layout: fixed; border-collapse: collapse; }
.c1 { width: 60px; } .c2 { width: 46px; } .c3 { width: 69px; }
.msgs > thead th { background: #f0eff0; height: 29px; font-weight: 400; padding: 0; line-height: 11px; border-right: 1px solid #aaa; white-space: nowrap; }
.msgs > thead th:last-child, .msgs > tbody > tr > td:last-child { border-right: 0; }
.msgs > thead th.left { text-align: left; padding-left: 1px; }
.edge { position: relative; }
.cursor { position: absolute; right: 0; bottom: -7px; width: 14px; height: 14px; }
.msgs > tbody > tr > td { height: 44px; vertical-align: top; padding: 0 1px; color: #2c7a33; border: 1px solid #aaa; border-left: 0; }
.msgs > tbody > tr.note > td { height: 144px; color: #2d2b6e; }
.msgs .mono { font: 10px/10px "Liberation Mono", monospace; white-space: nowrap; padding-top: 1px; overflow: hidden; }
.cog { border-collapse: collapse; table-layout: fixed; width: 420px; margin-top: 10px; }
.cog caption { text-align: left; padding: 10px 0 0 110px; line-height: 10px; }
.cog th, .cog td { font-weight: 400; padding: 0; text-align: right; line-height: 10px; }
.cog thead th { padding-bottom: 10px; }
.cog .name { width: 110px; } .cog .colon { width: 8px; } .cog .wt { width: 126px; } .cog .x { width: 55px; }
.cog td:first-child, .cog td:nth-child(2) { text-align: left; }
.cog td:nth-child(3) { padding-right: 6px; }

.hscroll { display: flex; align-items: center; height: 14px; background: #f0f0f0; flex: none; }
.hscroll button, .vscroll button { width: 13px; height: 13px; flex: none; display: grid; place-items: center; }
.hscroll svg, .vscroll svg { width: 10px; height: 10px; fill: none; stroke: #333; stroke-width: 1.500px; }
.track { flex: 1; height: 11px; display: flex; }
.thumb { background: #cbcbcb; height: 100%; }
.thumb.big { width: 63%; }
.thumb.small { width: 2%; }
.tabs { display: flex; height: 16px; color: #444; border-top: 1px solid #e2e2e4; }
.tabs button { padding: 0 4px; border-right: 1px solid #dadadc; }
.tabs .active { background: #f8f8fa; color: #2271b3; }
.tabs button:last-child { border: 0; }

.view { flex: 8 1 0; min-width: 0; display: grid; grid-template-columns: 1fr 13px; grid-template-rows: 1fr 15px; border-left: 2px solid #999; border-top: 2px solid #999; background: #f0f0f0; }
.scene { width: 100%; height: 100%; min-height: 0; background: #fff; }
.triad text { font: 12px "Liberation Sans", sans-serif; }
.vscroll { display: flex; flex-direction: column; align-items: center; padding-bottom: 1px; }
.split { width: 100%; height: 4px; border-bottom: 1px solid #777; border-right: 1px solid #777; background: #fff; }
.vtrack { flex: 1; width: 11px; }
.vthumb { display: block; width: 100%; height: 13px; background: #cbcbcb; }
.view-h { height: 15px; }
.vsplit { width: 4px; height: 11px; border-right: 1px solid #777; border-bottom: 1px solid #777; }
.corner { width: 12px; height: 12px; }

.status { display: flex; align-items: center; gap: 10px; height: 14px; padding: 0 17px 0 2px; background: #73a91c; color: #f4f9ea; }
.ready { flex: 1; }
.off { color: #93b95a; }
.bottom { flex: none; height: 27px; }
```
